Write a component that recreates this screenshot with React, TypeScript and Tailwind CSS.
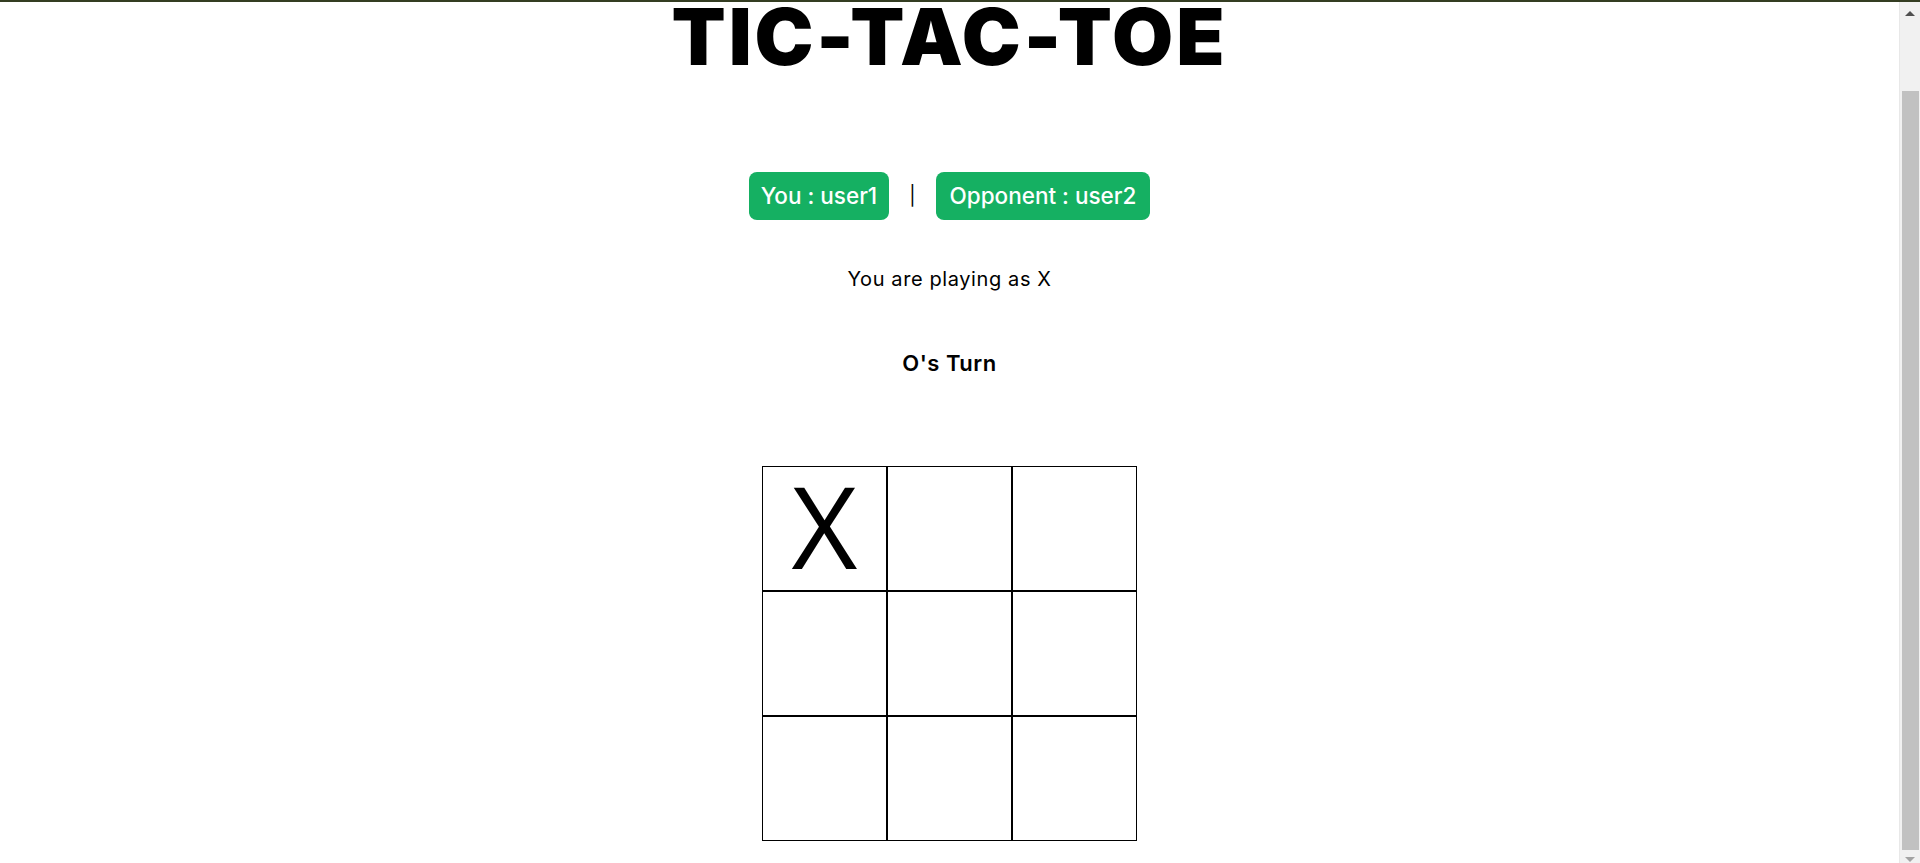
import { useLayoutEffect } from "react";

const board: string[] = ["X", "", "", "", "", "", "", "", ""];

function Cell({ value }: { value: string }) {
  return (
    <div className="flex h-[125px] w-[125px] items-center justify-center border border-black">
      <span className="mb-[8px] font-['Open_Sans',sans-serif] text-[114px] leading-none text-black">
        {value}
      </span>
    </div>
  );
}

function FakeScrollbar() {
  return (
    <div className="fixed bottom-0 right-0 top-0 z-10 flex w-[21px] flex-col items-center border-l border-[#e8e8e8] bg-[#f1f1f1]">
      <div className="mt-[11px] h-0 w-0 border-x-[5px] border-b-[5px] border-x-transparent border-b-[#505050]" />
      <div className="mt-[75px] h-[759px] w-[17px] bg-[#c1c1c1]" />
      <div className="mt-[7px] h-0 w-0 border-x-[5px] border-t-[5px] border-x-transparent border-t-[#a3a3a3]" />
    </div>
  );
}

export default function App() {
  // the page in the shot is scrolled to its end
  useLayoutEffect(() => {
    window.scrollTo(0, document.documentElement.scrollHeight);
  }, []);

  return (
    <div className="min-h-screen bg-white font-['Inter',sans-serif] text-black">
      <div className="fixed inset-x-0 top-0 z-20 h-[2px] bg-[#343d22]" />
      <FakeScrollbar />

      <div className="flex flex-col items-center pb-[22px] pr-[21px]">
        <h1 className="mt-[38px] text-[79px] font-black leading-none tracking-[2.8px]">
          TIC-TAC-TOE
        </h1>

        <div className="mt-[96px] flex items-center gap-[20px]">
          <div className="flex h-[48px] items-center rounded-lg bg-[#15b062] px-[12px] text-[22.5px] font-medium text-white">
            You : user1
          </div>
          <span className="text-[19px]">|</span>
          <div className="flex h-[48px] items-center rounded-lg bg-[#15b062] px-[14px] text-[22.5px] font-medium text-white">
            Opponent : user2
          </div>
        </div>

        <p className="mt-[45px] text-[20px] leading-[28px] tracking-[0.6px]">You are playing as X</p>

        <h2 className="mt-[55px] text-[22px] font-semibold leading-[30px] tracking-[0.5px]">O's Turn</h2>

        <div className="mt-[88px] grid grid-cols-3">
          {board.map((v, i) => (
            <Cell key={i} value={v} />
          ))}
        </div>
      </div>
    </div>
  );
}
